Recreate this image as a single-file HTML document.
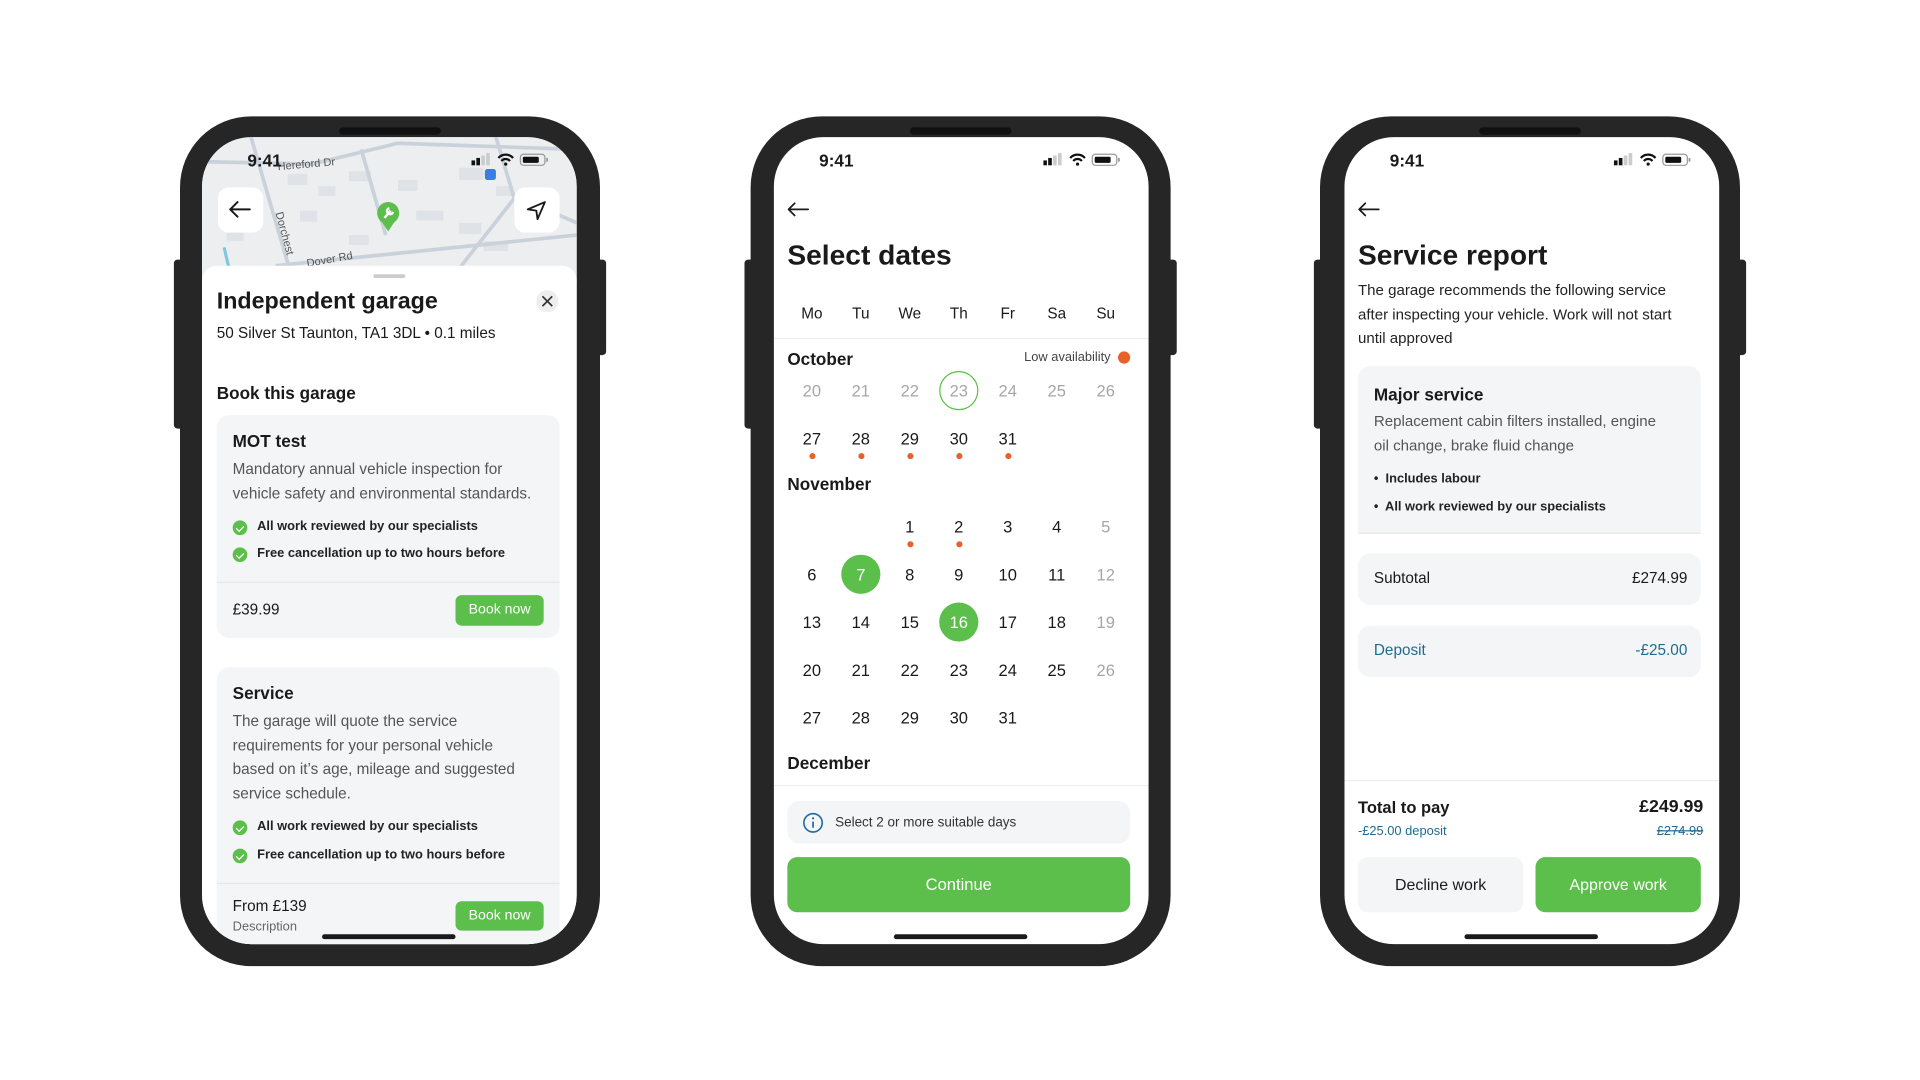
<!DOCTYPE html>
<html><head><meta charset="utf-8">
<style>
*{margin:0;padding:0;box-sizing:border-box}
html,body{width:1920px;height:1080px;background:#fff;overflow:hidden;font-family:"Liberation Sans",sans-serif;color:#1a1a1a}
#w{position:absolute;left:0;top:0;width:1568px;height:882px;transform:scale(1.22449);transform-origin:0 0}
.ph{position:absolute;top:95px;width:343px;height:694px;background:#262626;border-radius:58px}
.ph .bl{position:absolute;left:-5px;top:117px;width:6px;height:138px;background:#262626;border-radius:3px 0 0 3px}
.ph .br{position:absolute;right:-5px;top:117px;width:6px;height:78px;background:#262626;border-radius:0 3px 3px 0}
.ph .nt{position:absolute;left:130px;top:9px;width:83px;height:6px;background:#111;border-radius:3px}
.sc{position:absolute;top:112px;width:306px;height:659px;background:#fff;border-radius:40px;overflow:hidden}
.t{position:absolute;white-space:nowrap;line-height:1}
.home{position:absolute;left:98px;top:651px;width:109px;height:4px;background:#1a1a1a;border-radius:2px}
.card{position:absolute;background:#f4f5f7;border-radius:10px}
.btn{position:absolute;background:#5cbf4b;color:#fff;border-radius:5px;text-align:center;font-size:11.5px}
.ck{position:absolute;width:12px;height:12px;border-radius:50%;background:#5cbf4b}
.ck:after{content:"";position:absolute;left:3.5px;top:2.5px;width:3px;height:5px;border:solid #fff;border-width:0 1.5px 1.5px 0;transform:rotate(45deg)}
.c{position:absolute;width:40px;text-align:center;font-size:13.5px;line-height:1;font-weight:500}
.g{color:#a6a6a6}
.dot{position:absolute;width:5px;height:5px;border-radius:50%;background:#e8602a}
.b{font-weight:bold}
.li{font-size:10.5px;font-weight:bold;color:#222}
</style></head><body><div id="w">

<div class="ph" style="left:147px"><div class="bl"></div><div class="br"></div><div class="nt"></div></div>
<div class="ph" style="left:613px"><div class="bl"></div><div class="br"></div><div class="nt"></div></div>
<div class="ph" style="left:1078px"><div class="bl"></div><div class="br"></div><div class="nt"></div></div>

<svg width="0" height="0" style="position:absolute"><defs>
<g id="sb"><rect x="0" y="6" width="3" height="4" fill="#111"/><rect x="4" y="4" width="3" height="6" fill="#111"/><rect x="8" y="2" width="3" height="8" fill="#ccc"/><rect x="12" y="0" width="3" height="10" fill="#ccc"/>
<path d="M22 4 a8 8 0 0 1 12 0 M24.5 6.5 a4.5 4.5 0 0 1 7 0" stroke="#111" stroke-width="1.8" fill="none"/><circle cx="28" cy="9" r="1.3" fill="#111"/>
<rect x="40" y="1" width="20" height="9" rx="2.5" fill="none" stroke="#999" stroke-width="1"/><rect x="42" y="3" width="13" height="5" rx="1" fill="#111"/><rect x="61" y="4" width="1.5" height="3" fill="#999"/></g>
</defs></svg>

<!-- SCREEN 1 -->
<div class="sc" style="left:165px">
 <svg style="position:absolute;left:0;top:0" width="306" height="120">
  <rect width="306" height="120" fill="#eceef0"/>
  <g fill="#dfe2e6">
   <rect x="70" y="30" width="16" height="9"/><rect x="95" y="40" width="14" height="8"/><rect x="120" y="28" width="18" height="8"/><rect x="160" y="35" width="16" height="9"/><rect x="210" y="25" width="20" height="10"/><rect x="240" y="40" width="14" height="8"/><rect x="80" y="60" width="14" height="9"/><rect x="175" y="60" width="22" height="8"/><rect x="210" y="70" width="18" height="9"/><rect x="20" y="75" width="14" height="10"/><rect x="260" y="60" width="16" height="9"/><rect x="120" y="80" width="16" height="8"/><rect x="230" y="85" width="20" height="8"/>
  </g>
  <g stroke="#c9d1da" stroke-width="3" fill="none">
   <path d="M40 0 L75 120"/><path d="M0 20 L90 22 L160 5 L306 10"/><path d="M130 10 L150 80"/><path d="M60 105 L306 80"/><path d="M240 0 L255 50 L200 120"/><path d="M260 50 L306 70"/>
  </g>
  <path d="M18 90 L25 120" stroke="#7cc7e0" stroke-width="2.5"/>
  <text x="62" y="27" font-size="9" fill="#555" font-family="Liberation Sans" transform="rotate(-5 62 27)">Hereford Dr</text>
  <text x="86" y="106" font-size="9" fill="#555" font-family="Liberation Sans" transform="rotate(-10 86 106)">Dover Rd</text>
  <text x="60" y="62" font-size="9" fill="#555" font-family="Liberation Sans" transform="rotate(75 60 62)">Dorchest</text>
  <rect x="231" y="26" width="9" height="9" rx="2" fill="#3a7fe0"/>
  <circle cx="152" cy="62" r="9" fill="#5cbf4b"/><path d="M146 68 L152 77 L158 68Z" fill="#5cbf4b"/>
  <path d="M149 66 L154 60 M153 58 a2.5 2.5 0 1 0 3 3" stroke="#fff" stroke-width="2" fill="none"/>
 </svg>
 <div class="t b" style="left:37px;top:12px;font-size:14px">9:41</div>
 <svg style="position:absolute;left:220px;top:13px" width="64" height="11"><use href="#sb"/></svg>
 <div style="position:absolute;left:13px;top:41px;width:37px;height:37px;background:#fff;border-radius:9px"></div>
 <svg style="position:absolute;left:21px;top:51px" width="20" height="16"><path d="M2 8 H18 M2 8 L8 2 M2 8 L8 14" stroke="#1a1a1a" stroke-width="1.6" fill="none" stroke-linecap="round"/></svg>
 <div style="position:absolute;left:255px;top:41px;width:37px;height:37px;background:#fff;border-radius:9px"></div>
 <svg style="position:absolute;left:264px;top:51px" width="18" height="18"><path d="M16 2 L2 8 L9 9 L10 16 Z" stroke="#1a1a1a" stroke-width="1.5" fill="none" stroke-linejoin="round"/></svg>
 <div style="position:absolute;left:0;top:105px;width:306px;height:560px;background:#fff;border-radius:12px 12px 0 0"></div>
 <div style="position:absolute;left:140px;top:112px;width:26px;height:3px;background:#ccc;border-radius:2px"></div>
 <div class="t" style="left:12px;top:125px;font-size:19px;font-weight:bold">Independent garage</div>
 <div style="position:absolute;left:273px;top:125px;width:18px;height:18px;border-radius:50%;background:#eee"></div>
 <svg style="position:absolute;left:277px;top:129px" width="10" height="10"><path d="M1 1 L9 9 M9 1 L1 9" stroke="#333" stroke-width="1.4"/></svg>
 <div class="t" style="left:12px;top:154px;font-size:12.5px">50 Silver St Taunton, TA1 3DL • 0.1 miles</div>
 <div class="t b" style="left:12px;top:202px;font-size:14px">Book this garage</div>
 <div class="card" style="left:12px;top:227px;width:280px;height:182px">
  <div class="t b" style="left:13px;top:14px;font-size:14px">MOT test</div>
  <div class="t" style="left:13px;top:34px;font-size:12.5px;color:#555;line-height:20px">Mandatory annual vehicle inspection for<br>vehicle safety and environmental standards.</div>
  <div class="ck" style="left:13px;top:86px"></div><div class="t li" style="left:33px;top:86px">All work reviewed by our specialists</div>
  <div class="ck" style="left:13px;top:108px"></div><div class="t li" style="left:33px;top:108px">Free cancellation up to two hours before</div>
  <div style="position:absolute;left:0;top:136px;width:280px;height:1px;background:#e4e5e8"></div>
  <div class="t" style="left:13px;top:153px;font-size:12.5px">£39.99</div>
  <div class="btn" style="left:195px;top:147px;width:72px;height:25px;line-height:25px">Book now</div>
 </div>
 <div class="card" style="left:12px;top:433px;width:280px;height:300px">
  <div class="t b" style="left:13px;top:14px;font-size:14px">Service</div>
  <div class="t" style="left:13px;top:35px;font-size:12.5px;color:#555;line-height:19.7px">The garage will quote the service<br>requirements for your personal vehicle<br>based on it’s age, mileage and suggested<br>service schedule.</div>
  <div class="ck" style="left:13px;top:125px"></div><div class="t li" style="left:33px;top:125px">All work reviewed by our specialists</div>
  <div class="ck" style="left:13px;top:148px"></div><div class="t li" style="left:33px;top:148px">Free cancellation up to two hours before</div>
  <div style="position:absolute;left:0;top:176px;width:280px;height:1px;background:#e4e5e8"></div>
  <div class="t" style="left:13px;top:189px;font-size:12.5px">From £139</div>
  <div class="t" style="left:13px;top:207px;font-size:10.5px;color:#666">Description</div>
  <div class="btn" style="left:195px;top:191px;width:72px;height:24px;line-height:24px">Book now</div>
 </div>
 <div class="home"></div>
</div>

<!-- SCREEN 2 -->
<div class="sc" style="left:632px">
 <div class="t b" style="left:37px;top:12px;font-size:14px">9:41</div>
 <svg style="position:absolute;left:220px;top:13px" width="64" height="11"><use href="#sb"/></svg>
 <svg style="position:absolute;left:10px;top:52px" width="20" height="14"><path d="M2 7 H18 M2 7 L7 2 M2 7 L7 12" stroke="#1a1a1a" stroke-width="1.4" fill="none" stroke-linecap="round"/></svg>
 <div class="t b" style="left:11px;top:85px;font-size:23px">Select dates</div>
 <div class="c" style="left:11px;top:138px;font-size:12.5px">Mo</div><div class="c" style="left:51px;top:138px;font-size:12.5px">Tu</div><div class="c" style="left:91px;top:138px;font-size:12.5px">We</div><div class="c" style="left:131px;top:138px;font-size:12.5px">Th</div><div class="c" style="left:171px;top:138px;font-size:12.5px">Fr</div><div class="c" style="left:211px;top:138px;font-size:12.5px">Sa</div><div class="c" style="left:251px;top:138px;font-size:12.5px">Su</div>
 <div style="position:absolute;left:0;top:164px;width:306px;height:1px;background:#eee"></div>
 <div class="t b" style="left:11px;top:174px;font-size:14px">October</div>
 <div class="t" style="right:31px;top:175px;font-size:10.5px;color:#444">Low availability</div>
 <div style="position:absolute;left:281px;top:175px;width:10px;height:10px;border-radius:50%;background:#e8602a"></div>
 <div style="position:absolute;left:135px;top:191px;width:32px;height:32px;border-radius:50%;border:1.5px solid #5cbf4b"></div>
 <div class="c g" style="left:11px;top:201px">20</div><div class="c g" style="left:51px;top:201px">21</div><div class="c g" style="left:91px;top:201px">22</div><div class="c g" style="left:131px;top:201px">23</div><div class="c g" style="left:171px;top:201px">24</div><div class="c g" style="left:211px;top:201px">25</div><div class="c g" style="left:251px;top:201px">26</div>
 <div class="c" style="left:11px;top:240px">27</div><div class="c" style="left:51px;top:240px">28</div><div class="c" style="left:91px;top:240px">29</div><div class="c" style="left:131px;top:240px">30</div><div class="c" style="left:171px;top:240px">31</div>
 <div class="dot" style="left:29px;top:258px"></div><div class="dot" style="left:69px;top:258px"></div><div class="dot" style="left:109px;top:258px"></div><div class="dot" style="left:149px;top:258px"></div><div class="dot" style="left:189px;top:258px"></div>
 <div class="t b" style="left:11px;top:276px;font-size:14px">November</div>
 <div class="c" style="left:91px;top:312px">1</div><div class="c" style="left:131px;top:312px">2</div><div class="c" style="left:171px;top:312px">3</div><div class="c" style="left:211px;top:312px">4</div><div class="c g" style="left:251px;top:312px">5</div>
 <div class="dot" style="left:109px;top:330px"></div><div class="dot" style="left:149px;top:330px"></div>
 <div style="position:absolute;left:55px;top:341px;width:32px;height:32px;border-radius:50%;background:#5cbf4b"></div>
 <div style="position:absolute;left:135px;top:380px;width:32px;height:32px;border-radius:50%;background:#5cbf4b"></div>
 <div class="c" style="left:11px;top:351px">6</div><div class="c" style="left:51px;top:351px;color:#fff">7</div><div class="c" style="left:91px;top:351px">8</div><div class="c" style="left:131px;top:351px">9</div><div class="c" style="left:171px;top:351px">10</div><div class="c" style="left:211px;top:351px">11</div><div class="c g" style="left:251px;top:351px">12</div>
 <div class="c" style="left:11px;top:390px">13</div><div class="c" style="left:51px;top:390px">14</div><div class="c" style="left:91px;top:390px">15</div><div class="c" style="left:131px;top:390px;color:#fff">16</div><div class="c" style="left:171px;top:390px">17</div><div class="c" style="left:211px;top:390px">18</div><div class="c g" style="left:251px;top:390px">19</div>
 <div class="c" style="left:11px;top:429px">20</div><div class="c" style="left:51px;top:429px">21</div><div class="c" style="left:91px;top:429px">22</div><div class="c" style="left:131px;top:429px">23</div><div class="c" style="left:171px;top:429px">24</div><div class="c" style="left:211px;top:429px">25</div><div class="c g" style="left:251px;top:429px">26</div>
 <div class="c" style="left:11px;top:468px">27</div><div class="c" style="left:51px;top:468px">28</div><div class="c" style="left:91px;top:468px">29</div><div class="c" style="left:131px;top:468px">30</div><div class="c" style="left:171px;top:468px">31</div>
 <div class="t b" style="left:11px;top:504px;font-size:14px">December</div>
 <div style="position:absolute;left:0;top:529px;width:306px;height:1px;background:#eee"></div>
 <div class="card" style="left:11px;top:542px;width:280px;height:35px"></div>
 <svg style="position:absolute;left:23px;top:551px" width="18" height="18"><circle cx="9" cy="9" r="7.5" stroke="#1f6b9a" stroke-width="1.3" fill="none"/><path d="M9 8 V13" stroke="#1f6b9a" stroke-width="1.4"/><circle cx="9" cy="5.3" r="0.9" fill="#1f6b9a"/></svg>
 <div class="t" style="left:50px;top:555px;font-size:11px;color:#333">Select 2 or more suitable days</div>
 <div class="btn" style="left:11px;top:588px;width:280px;height:45px;line-height:45px;font-size:13.5px;border-radius:8px">Continue</div>
 <div class="home"></div>
</div>

<!-- SCREEN 3 -->
<div class="sc" style="left:1098px">
 <div class="t b" style="left:37px;top:12px;font-size:14px">9:41</div>
 <svg style="position:absolute;left:220px;top:13px" width="64" height="11"><use href="#sb"/></svg>
 <svg style="position:absolute;left:10px;top:52px" width="20" height="14"><path d="M2 7 H18 M2 7 L7 2 M2 7 L7 12" stroke="#1a1a1a" stroke-width="1.4" fill="none" stroke-linecap="round"/></svg>
 <div class="t b" style="left:11px;top:85px;font-size:23px">Service report</div>
 <div class="t" style="left:11px;top:116px;font-size:12.3px;line-height:19.5px;color:#222">The garage recommends the following service<br>after inspecting your vehicle. Work will not start<br>until approved</div>
 <div class="card" style="left:11px;top:187px;width:280px;height:137px;border-radius:10px 10px 0 0;border-bottom:1px solid #e4e5e8"></div>
 <div class="t b" style="left:24px;top:203px;font-size:14px">Major service</div>
 <div class="t" style="left:24px;top:223px;font-size:12.3px;line-height:19.5px;color:#555">Replacement cabin filters installed, engine<br>oil change, brake fluid change</div>
 <div class="t li" style="left:24px;top:274px">•&nbsp; Includes labour</div>
 <div class="t li" style="left:24px;top:297px">•&nbsp; All work reviewed by our specialists</div>
 <div class="card" style="left:11px;top:340px;width:280px;height:42px"></div>
 <div class="t" style="left:24px;top:354px;font-size:12.5px">Subtotal</div>
 <div class="t" style="right:26px;top:354px;font-size:12.5px">£274.99</div>
 <div class="card" style="left:11px;top:399px;width:280px;height:42px"></div>
 <div class="t" style="left:24px;top:413px;font-size:12.5px;color:#1f6b8f">Deposit</div>
 <div class="t" style="right:26px;top:413px;font-size:12.5px;color:#1f6b8f">-£25.00</div>
 <div style="position:absolute;left:0;top:525px;width:306px;height:1px;background:#eee"></div>
 <div class="t b" style="left:11px;top:541px;font-size:13.5px">Total to pay</div>
 <div class="t b" style="right:13px;top:540px;font-size:14.5px">£249.99</div>
 <div class="t" style="left:11px;top:562px;font-size:10.5px;color:#1f6b8f">-£25.00 deposit</div>
 <div class="t" style="right:13px;top:562px;font-size:10.5px;color:#1f6b8f;text-decoration:line-through">£274.99</div>
 <div class="card" style="left:11px;top:588px;width:135px;height:45px;border-radius:8px;text-align:center;line-height:45px;font-size:13px">Decline work</div>
 <div class="btn" style="left:156px;top:588px;width:135px;height:45px;line-height:45px;font-size:13px;border-radius:8px">Approve work</div>
 <div class="home"></div>
</div>

</div></body></html>
